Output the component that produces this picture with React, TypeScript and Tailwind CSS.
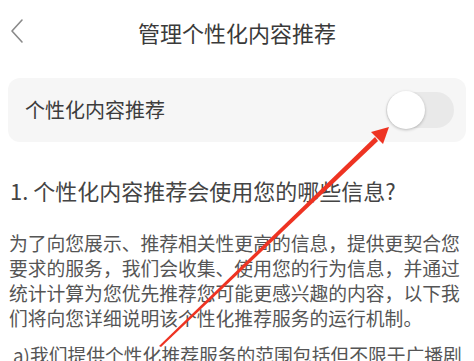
import React from "react";

export default function App() {
  return (
    <div
      className="relative w-[474px] h-[361px] overflow-hidden bg-white"
      style={{ fontFamily: '"Noto Sans CJK SC", "Noto Sans", sans-serif' }}
    >
      <div className="relative h-[64px] flex items-center justify-center">
        <svg className="absolute left-[9px] top-[18px]" width="16" height="26" viewBox="0 0 16 26">
          <path d="M13 2 L3 13 L13 24" fill="none" stroke="#8a8a8a" strokeWidth="1.6" strokeLinecap="round" strokeLinejoin="round" />
        </svg>
        <span className="text-[22px] text-[#3a3a3a] leading-none">管理个性化内容推荐</span>
      </div>

      <div className="mx-[8px] mt-[14px] h-[64px] rounded-[12px] bg-[#f6f6f6] flex items-center justify-between pl-[17px] pr-[12px]">
        <span className="text-[20px] text-[#3c3c3c]">个性化内容推荐</span>
        <div className="relative w-[68px] h-[36px] rounded-full bg-[#e9e9e9]">
          <div className="absolute left-[1px] top-[-1px] w-[38px] h-[38px] rounded-full bg-white shadow-[0_1px_3px_rgba(0,0,0,0.25)]" />
        </div>
      </div>

      <div className="mt-[34px] px-[10px] text-[22px] leading-[28px] text-[#444] whitespace-nowrap">
        1. 个性化内容推荐会使用您的哪些信息?
      </div>

      <p className="mt-[26px] pl-[9px] pr-[8px] text-[18.8px] leading-[25px] text-[#555]">
        为了向您展示、推荐相关性更高的信息，提供更契合您要求的服务，我们会收集、使用您的行为信息，并通过统计计算为您优先推荐您可能更感兴趣的内容，以下我们将向您详细说明该个性化推荐服务的运行机制。
      </p>

      <p className="mt-[12px] pl-[13px] text-[18.8px] leading-[25px] text-[#555] whitespace-nowrap">
        a)我们提供个性化推荐服务的范围包括但不限于广播剧
      </p>

      <svg className="absolute left-0 top-0 pointer-events-none" width="474" height="361" viewBox="0 0 474 361">
        <polygon points="159,346 161,347 378,141 375,137" fill="#ee3322" />
        <polygon points="389,127 371,132 383,144" fill="#ee3322" />
      </svg>
    </div>
  );
}
